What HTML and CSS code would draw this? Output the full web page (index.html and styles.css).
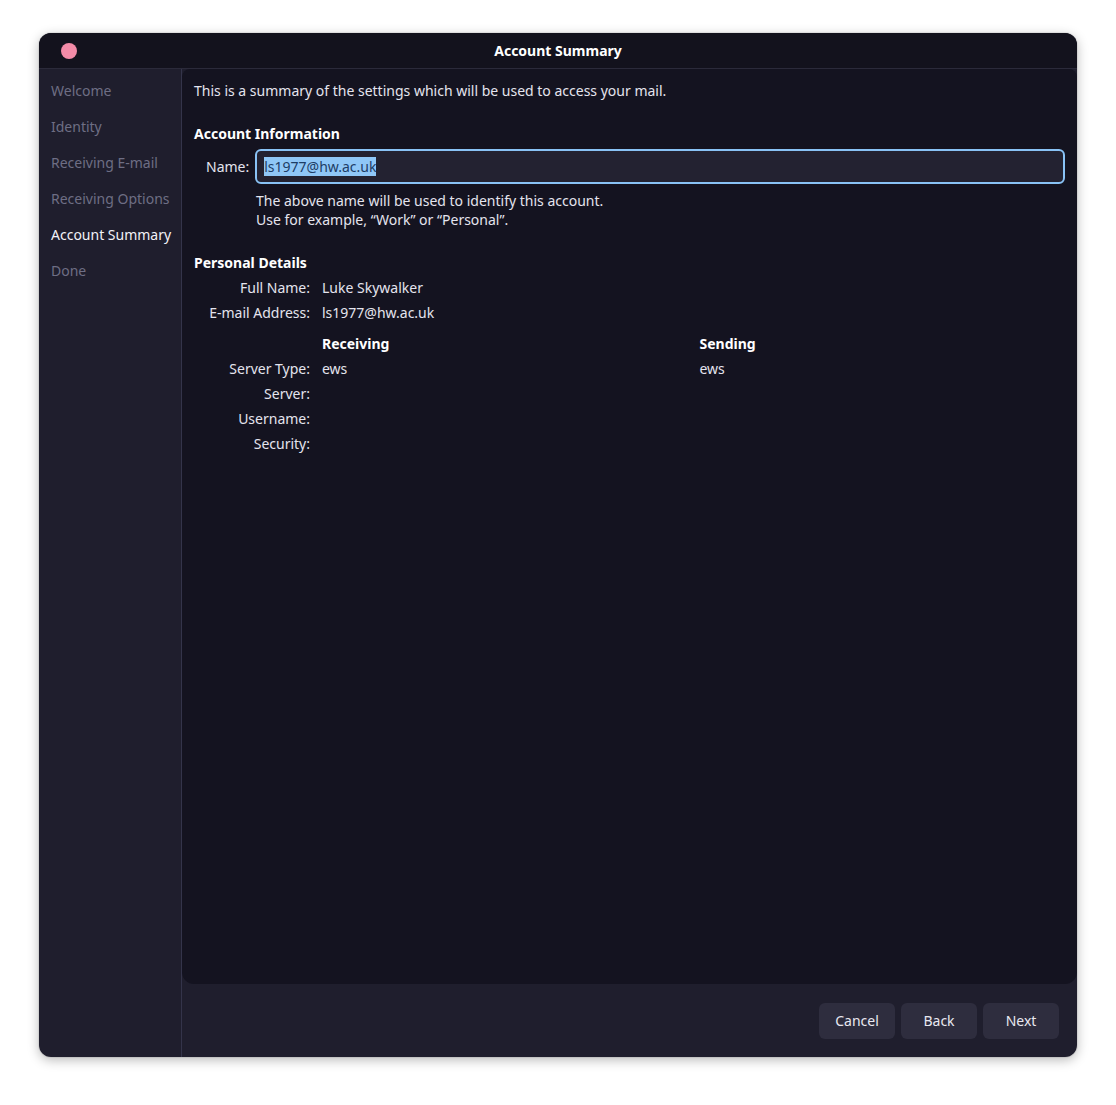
FILE: index.html
```html
<!DOCTYPE html>
<html>
<head>
<meta charset="utf-8">
<link rel="stylesheet" href="styles.css">
</head>
<body>
<div class="window">
  <header class="titlebar">
    <span class="close"></span>
    <span class="title">Account Summary</span>
  </header>
  <div class="body">
    <nav class="sidebar">
      <div class="nav-item">Welcome</div>
      <div class="nav-item">Identity</div>
      <div class="nav-item">Receiving E-mail</div>
      <div class="nav-item">Receiving Options</div>
      <div class="nav-item active">Account Summary</div>
      <div class="nav-item">Done</div>
    </nav>
    <main class="main">
      <section class="content">
        <p class="intro">This is a summary of the settings which will be used to access your mail.</p>
        <h2 class="section-title">Account Information</h2>
        <div class="name-row">
          <span class="name-label">Name:</span>
          <div class="input"><span class="selected">ls1977@hw.ac.uk</span></div>
        </div>
        <div class="hint">
          <div>The above name will be used to identify this account.</div>
          <div>Use for example, “Work” or “Personal”.</div>
        </div>
        <h2 class="section-title details-title">Personal Details</h2>
        <div class="grid">
          <span class="lbl">Full Name:</span><span class="val">Luke Skywalker</span><span></span>
          <span class="lbl">E-mail Address:</span><span class="val">ls1977@hw.ac.uk</span><span></span>
          <span class="lbl"></span><span class="val head">Receiving</span><span class="val head">Sending</span>
          <span class="lbl">Server Type:</span><span class="val">ews</span><span class="val">ews</span>
          <span class="lbl">Server:</span><span class="val"></span><span class="val"></span>
          <span class="lbl">Username:</span><span class="val"></span><span class="val"></span>
          <span class="lbl">Security:</span><span class="val"></span><span class="val"></span>
        </div>
      </section>
      <footer class="actions">
        <button class="btn">Cancel</button>
        <button class="btn">Back</button>
        <button class="btn">Next</button>
      </footer>
    </main>
  </div>
</div>
</body>
</html>
```
FILE: styles.css
```css
html, body {
  margin: 0;
  padding: 0;
  background: #ffffff;
}
body {
  font-family: "Noto Sans", "Open Sans", sans-serif;
  font-size: 14px;
  color: #e4e4ee;
  padding: 33px 39px 48px 39px;
}
.window {
  width: 1038px;
  height: 1024px;
  border-radius: 12px;
  overflow: hidden;
  background: #1f1e2d;
  display: flex;
  flex-direction: column;
  box-shadow: 0 3px 12px rgba(0, 0, 0, 0.28), 0 0 0 1px rgba(0, 0, 0, 0.06);
}
.titlebar {
  height: 35px;
  flex: none;
  background: #13121d;
  border-bottom: 1px solid #2b2a3a;
  display: flex;
  align-items: center;
  justify-content: center;
  position: relative;
}
.close {
  position: absolute;
  left: 22px;
  top: 10px;
  width: 16px;
  height: 16px;
  border-radius: 50%;
  background: #f38ba8;
}
.title {
  font-weight: 700;
  color: #ffffff;
}
.body {
  flex: 1;
  display: flex;
  min-height: 0;
}
.sidebar {
  width: 142px;
  flex: none;
  border-right: 1px solid #34344a;
  padding-top: 12px;
}
.nav-item {
  height: 36px;
  line-height: 20px;
  padding-left: 12px;
  color: #6e6e84;
  white-space: nowrap;
}
.nav-item.active {
  color: #f2f2f8;
}
.main {
  flex: 1;
  display: flex;
  flex-direction: column;
  min-width: 0;
}
.content {
  flex: 1;
  background: #141320;
  border-radius: 8px 8px 12px 12px;
  padding: 12px 12px 0 12px;
}
.intro {
  margin: 0;
  line-height: 20px;
}
.section-title {
  margin: 23px 0 0 0;
  font-size: 14px;
  font-weight: 700;
  line-height: 20px;
  color: #ffffff;
}
.name-row {
  display: flex;
  align-items: center;
  gap: 6px;
  margin-top: 5px;
  padding-left: 12px;
}
.name-label {
  line-height: 20px;
}
.input {
  flex: 1;
  height: 31px;
  border: 2px solid #89c2f5;
  border-radius: 6px;
  background: #232231;
  display: flex;
  align-items: center;
  padding-left: 7px;
}
.selected {
  background: #8fc7f7;
  color: #1d3d66;
  line-height: 19px;
}
.hint {
  margin-top: 7px;
  padding-left: 62px;
  line-height: 19px;
}
.details-title {
  margin-top: 24px;
}
.grid {
  display: grid;
  grid-template-columns: 104px 1fr 1fr;
  grid-template-rows: 25px 25px 31px 25px 25px 25px 25px;
  column-gap: 12px;
  padding-left: 12px;
  margin-top: 5px;
}
.lbl {
  text-align: right;
  line-height: 20px;
  white-space: nowrap;
}
.val {
  line-height: 20px;
}
.val.head {
  font-weight: 700;
  color: #ffffff;
  padding-top: 6px;
}
.actions {
  height: 73px;
  flex: none;
  display: flex;
  justify-content: flex-end;
  align-items: center;
  gap: 6px;
  padding-right: 18px;
}
.btn {
  width: 76px;
  height: 36px;
  border: none;
  border-radius: 6px;
  background: #2e2d3e;
  color: #e8e8f0;
  font-family: inherit;
  font-size: 14px;
  padding: 0;
}
```
